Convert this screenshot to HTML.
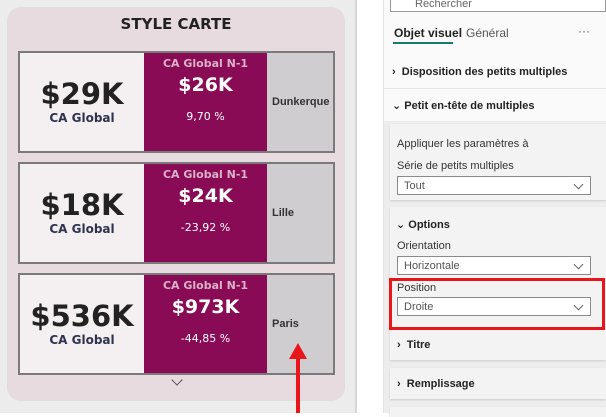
<!DOCTYPE html><html><head><style>
*{margin:0;padding:0;box-sizing:border-box}
body{width:606px;height:413px;overflow:hidden;background:#fff;font-family:"Liberation Sans","DejaVu Sans",sans-serif;position:relative}
.a{position:absolute}
.card{position:absolute;left:18px;width:317px;height:102px;border:2px solid #7a7a7a;display:flex}
.c1{width:124px;flex:none;background:#f4eff1;text-align:center;color:#222}
.c2{width:123px;flex:none;background:#8a0b55;text-align:center;color:#fff}
.c3{flex:1;min-width:0;overflow:hidden;white-space:nowrap;background:#d0cdd0;font:bold 11px "Liberation Sans",sans-serif;color:#333;padding-left:5px;display:flex;align-items:center}
.big{font:bold 29px "DejaVu Sans",sans-serif}
.lab{font:bold 12px "DejaVu Sans",sans-serif;color:#2e3350}
.n1{font:bold 11px "DejaVu Sans",sans-serif;color:#d9b2c8;margin-top:4px}
.v2{font:bold 19px "DejaVu Sans",sans-serif;margin-top:4px}
.pc{font:11px "DejaVu Sans",sans-serif;margin-top:14px}
.sec{position:absolute;left:390px;width:216px;background:#f4f3f3;box-shadow:0 1px 2px #ccc}
.t{position:absolute;font-size:11px;color:#333}
.b{font-weight:bold;color:#222}
.dd{position:absolute;left:397px;width:194px;height:19px;background:#fff;border:1px solid #8a8a8a;font-size:11px;color:#555;padding:3px 0 0 6px}
.dd:after{content:"";position:absolute;right:8px;top:4px;width:6px;height:6px;border-right:1px solid #666;border-bottom:1px solid #666;transform:rotate(45deg)}
</style></head><body>
<div class="a" style="left:0;top:0;width:356px;height:413px;background:#ececec"></div>
<div class="a" style="left:355px;top:0;width:2px;height:413px;background:#d6d6d6"></div>
<div class="a" style="left:7px;top:7px;width:338px;height:394px;background:#e8dbe0;border-radius:14px;border:1px solid #ddd"></div>
<div class="a" style="left:7px;top:15px;width:338px;text-align:center;font:bold 15px 'DejaVu Sans',sans-serif;color:#222">STYLE CARTE</div>

<div class="card" style="top:51px"><div class="c1"><div class="big" style="margin-top:24px">$29K</div><div class="lab">CA Global</div></div><div class="c2"><div class="n1">CA Global N-1</div><div class="v2">$26K</div><div class="pc">9,70 %</div></div><div class="c3">Dunkerque</div></div>
<div class="card" style="top:162px"><div class="c1"><div class="big" style="margin-top:24px">$18K</div><div class="lab">CA Global</div></div><div class="c2"><div class="n1">CA Global N-1</div><div class="v2">$24K</div><div class="pc">-23,92 %</div></div><div class="c3">Lille</div></div>
<div class="card" style="top:273px"><div class="c1"><div class="big" style="margin-top:24px">$536K</div><div class="lab">CA Global</div></div><div class="c2"><div class="n1">CA Global N-1</div><div class="v2">$973K</div><div class="pc">-44,85 %</div></div><div class="c3">Paris</div></div>
<div class="a" style="left:173px;top:376px;width:8px;height:8px;border-right:1px solid #555;border-bottom:1px solid #555;transform:rotate(45deg)"></div>
<svg class="a" style="left:288px;top:343px" width="20" height="70"><polygon points="10,0 1,16 19,16" fill="#e8161b"/><rect x="8" y="14" width="4" height="56" fill="#e8161b"/></svg>

<div class="a" style="left:383px;top:0;width:1px;height:413px;background:#e2e2e2"></div>
<div class="a" style="left:384px;top:0;width:222px;height:413px;background:#fafafa"></div>
<div class="a" style="left:390px;top:-6px;width:216px;height:18px;border:1px solid #999;background:#fff;font-size:11px;color:#666;padding:3px 0 0 24px">Rechercher</div>
<div class="t b" style="left:394px;top:26px;font-size:12px">Objet visuel</div>
<div class="a" style="left:393px;top:42px;width:60px;height:2px;background:#167a6e"></div>
<div class="t" style="left:466px;top:26px;font-size:12px;color:#555">Général</div>
<div class="t" style="left:578px;top:24px;font-size:12px;color:#555">···</div>
<div class="t b" style="left:392px;top:66px">›&nbsp; Disposition des petits multiples</div>
<div class="a" style="left:384px;top:88px;width:222px;height:1px;background:#e6e6e6"></div>
<div class="t b" style="left:392px;top:99px">⌄ Petit en-tête de multiples</div>
<div class="a" style="left:384px;top:121px;width:222px;height:292px;background:#eeeded"></div>
<div class="sec" style="top:124px;height:76px"></div>
<div class="t" style="left:397px;top:138px">Appliquer les paramètres à</div>
<div class="t" style="left:397px;top:160px">Série de petits multiples</div>
<div class="dd" style="top:176px">Tout</div>
<div class="sec" style="top:207px;height:153px"></div>
<div class="t b" style="left:396px;top:218px">⌄ Options</div>
<div class="t" style="left:397px;top:240px">Orientation</div>
<div class="dd" style="top:256px">Horizontale</div>
<div class="a" style="left:389px;top:278px;width:216px;height:52px;border:3px solid #e8161b"></div>
<div class="t" style="left:397px;top:282px">Position</div>
<div class="dd" style="top:297px">Droite</div>
<div class="t b" style="left:397px;top:339px">›&nbsp; Titre</div>
<div class="sec" style="top:368px;height:31px"></div>
<div class="t b" style="left:397px;top:378px">›&nbsp; Remplissage</div>
<div class="sec" style="top:407px;height:10px"></div>
</body></html>
